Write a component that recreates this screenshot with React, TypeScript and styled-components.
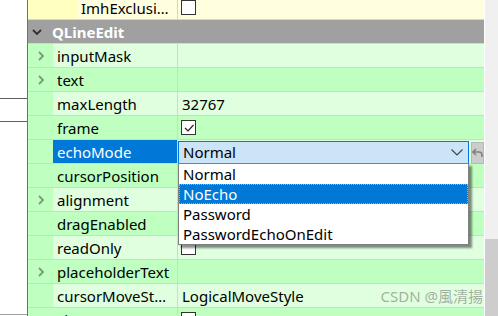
import styled, { createGlobalStyle } from 'styled-components'

const GlobalStyle = createGlobalStyle`
  html, body {
    margin: 0;
    padding: 0;
    background: #ffffff;
  }
  body {
    font-family: 'Noto Sans', 'Open Sans', 'Noto Sans CJK SC', sans-serif;
    font-size: 15px;
    color: #000000;
  }
`

const colors = {
  light: '#dfffdf',
  dark: '#bfffbf',
  yellowLight: '#ffffdf',
  yellowDark: '#ffffbf',
  header: '#a0a0a0',
  grid: '#d4d4d4',
  blue: '#0078d7',
  comboBg: '#cce4f7',
}

type Tone = 'light' | 'dark'

type Prop = {
  name: string
  tone: Tone
  expandable?: boolean
  value?: string
  check?: 'on' | 'off'
  combo?: boolean
}

const props: Prop[] = [
  { name: 'inputMask', tone: 'light', expandable: true },
  { name: 'text', tone: 'dark', expandable: true },
  { name: 'maxLength', tone: 'light', value: '32767' },
  { name: 'frame', tone: 'dark', check: 'on' },
  { name: 'echoMode', tone: 'light', combo: true },
  { name: 'cursorPosition', tone: 'dark' },
  { name: 'alignment', tone: 'light', expandable: true },
  { name: 'dragEnabled', tone: 'dark' },
  { name: 'readOnly', tone: 'light', check: 'off' },
  { name: 'placeholderText', tone: 'dark', expandable: true },
  { name: 'cursorMoveSt…', tone: 'light', value: 'LogicalMoveStyle' },
  { name: 'clearButtonEn…', tone: 'dark', check: 'off' },
]

const echoModes = ['Normal', 'NoEcho', 'Password', 'PasswordEchoOnEdit']

export default function App() {
  return (
    <>
      <GlobalStyle />
      <Screen>
        <LeftPane>
          <LeftBox />
          <LeftFooter />
        </LeftPane>
        <Tree>
          <Rows>
            <Row>
              <Branch $bg={colors.yellowDark} $w={50} />
              <NameCell $bg={colors.yellowLight} $w={100} $pad={3}>
                ImhExclusi…
              </NameCell>
              <ValueCell $bg={colors.yellowLight}>
                <CheckBox />
              </ValueCell>
            </Row>
            <HeaderRow>
              <HeaderBranch>
                <Chevron dir="down" color="#303030" />
              </HeaderBranch>
              <HeaderTitle>QLineEdit</HeaderTitle>
            </HeaderRow>
            {props.map((p) => (
              <PropRow key={p.name} prop={p} />
            ))}
          </Rows>
        </Tree>
        <ScrollTrack>
          <ScrollThumb />
        </ScrollTrack>
        <Watermark>CSDN @風清揚</Watermark>
      </Screen>
    </>
  )
}

const PropRow = ({ prop }: { prop: Prop }) => {
  const bg = prop.tone === 'light' ? colors.light : colors.dark
  return (
    <Row>
      <Branch $bg={colors.dark} $w={25}>
        {prop.expandable && <Chevron dir="right" color="#7a9a7a" />}
      </Branch>
      <NameCell $bg={prop.combo ? colors.blue : bg} $w={125} $selected={prop.combo}>
        {prop.name}
      </NameCell>
      <ValueCell $bg={bg}>
        {prop.value && <ValueText>{prop.value}</ValueText>}
        {prop.check && <CheckBox>{prop.check === 'on' && <CheckMark />}</CheckBox>}
        {prop.combo && <EchoCombo />}
      </ValueCell>
    </Row>
  )
}

const EchoCombo = () => (
  <ComboWrap>
    <Combo>
      <ValueText>Normal</ValueText>
      <svg width="12" height="7" viewBox="0 0 12 7">
        <polyline points="0.5,0.5 6,6 11.5,0.5" fill="none" stroke="#404040" strokeWidth="1.1" />
      </svg>
    </Combo>
    <ResetButton>
      <svg width="11" height="10" viewBox="0 0 11 10">
        <path d="M4 1 L1 4 L4 7 M1 4 H7 Q10 4 10 7 V9" fill="none" stroke="#808080" strokeWidth="1.6" />
      </svg>
    </ResetButton>
    <Popup>
      {echoModes.map((m) => (
        <PopupItem key={m} $active={m === 'NoEcho'}>
          {m}
        </PopupItem>
      ))}
    </Popup>
  </ComboWrap>
)

const Chevron = ({ dir, color }: { dir: 'down' | 'right'; color: string }) => (
  <svg width="10" height="10" viewBox="0 0 10 10">
    {dir === 'down' ? (
      <polyline points="1,3 5,7 9,3" fill="none" stroke={color} strokeWidth="1.8" />
    ) : (
      <polyline points="3,1 7,5 3,9" fill="none" stroke={color} strokeWidth="1.8" />
    )}
  </svg>
)

const CheckMark = () => (
  <svg width="12" height="12" viewBox="0 0 12 12">
    <polyline points="2,6 5,9 10.5,3" fill="none" stroke="#202020" strokeWidth="1.2" />
  </svg>
)

const Screen = styled.div`
  position: relative;
  display: flex;
  width: 498px;
  height: 316px;
  overflow: hidden;
  background: #ffffff;
`

const LeftPane = styled.div`
  display: flex;
  flex-direction: column;
  width: 27px;
  flex-shrink: 0;
  border-right: 1px solid #707070;
`

const LeftBox = styled.div`
  margin-top: 98px;
  height: 22px;
  border-top: 1px solid #606060;
  border-bottom: 1px solid #606060;
`

const LeftFooter = styled.div`
  margin-top: auto;
  margin-bottom: 1px;
  border-bottom: 1px solid #a0a0a0;
`

const Tree = styled.div`
  width: 456px;
  flex-shrink: 0;
  overflow: hidden;
  border-right: 1px solid #ffffff;
`

const Rows = styled.div`
  display: flex;
  flex-direction: column;
  margin-top: -4px;
`

const Row = styled.div`
  display: flex;
  height: 23px;
  flex-shrink: 0;
  border-bottom: 1px solid ${colors.grid};
`

const HeaderRow = styled(Row)`
  background: ${colors.header};
  align-items: center;
`

const HeaderBranch = styled.div`
  display: flex;
  align-items: center;
  width: 24px;
  padding-left: 4px;
  box-sizing: border-box;
`

const HeaderTitle = styled.div`
  color: #ffffff;
  font-weight: bold;
`

const Branch = styled.div<{ $bg?: string; $w: number }>`
  display: flex;
  align-items: center;
  justify-content: center;
  width: ${(p) => p.$w}px;
  flex-shrink: 0;
  background: ${(p) => p.$bg ?? 'transparent'};
  padding-left: 1px;
  box-sizing: border-box;
`

const NameCell = styled.div<{ $bg: string; $w: number; $selected?: boolean; $pad?: number }>`
  display: flex;
  align-items: center;
  width: ${(p) => p.$w}px;
  flex-shrink: 0;
  padding-left: ${(p) => p.$pad ?? 4}px;
  box-sizing: border-box;
  background: ${(p) => p.$bg};
  color: ${(p) => (p.$selected ? '#ffffff' : '#000000')};
  border-right: 1px solid ${colors.grid};
  white-space: nowrap;
  overflow: hidden;
`

const ValueCell = styled.div<{ $bg: string }>`
  position: relative;
  display: flex;
  align-items: center;
  flex: 1;
  min-width: 0;
  background: ${(p) => p.$bg};
`

const ValueText = styled.span`
  padding-left: 4px;
  white-space: nowrap;
`

const CheckBox = styled.div`
  display: flex;
  align-items: center;
  justify-content: center;
  width: 13px;
  height: 13px;
  margin-left: 3px;
  border: 1px solid #333333;
  background: #ffffff;
`

const ComboWrap = styled.div`
  position: relative;
  display: flex;
  align-items: stretch;
  gap: 1px;
  width: 100%;
  height: 23px;
  margin-top: 1px;
`

const Combo = styled.div`
  display: flex;
  align-items: center;
  justify-content: space-between;
  width: 291px;
  box-sizing: border-box;
  padding-right: 5px;
  background: ${colors.comboBg};
  border: 1px solid ${colors.blue};
`

const ResetButton = styled.div`
  display: flex;
  align-items: center;
  justify-content: center;
  width: 13px;
  margin: 1px 0 0 1px;
  background: #cccccc;
  border: 1px solid #b8b8b8;
  box-sizing: border-box;
`

const Popup = styled.div`
  position: absolute;
  top: 22px;
  left: 0;
  z-index: 5;
  width: 291px;
  box-sizing: border-box;
  background: #ffffff;
  border: 1px solid #808080;
  box-shadow: 3px 3px 2px rgba(0, 0, 0, 0.45);
`

const PopupItem = styled.div<{ $active?: boolean }>`
  display: flex;
  align-items: center;
  height: 20px;
  padding-left: 3px;
  box-sizing: border-box;
  background: ${(p) => (p.$active ? colors.blue : '#ffffff')};
  color: ${(p) => (p.$active ? '#ffffff' : '#000000')};
  border: 1px dotted ${(p) => (p.$active ? '#f0a040' : 'transparent')};
`

const ScrollTrack = styled.div`
  display: flex;
  flex-direction: column;
  flex: 1;
  background: #f0f0f0;
`

const ScrollThumb = styled.div`
  margin-top: 239px;
  flex: 1;
  background: #cdcdcd;
`

const Watermark = styled.div`
  position: absolute;
  right: 15px;
  bottom: 10px;
  color: rgba(120, 120, 120, 0.6);
  font-size: 15px;
  font-family: 'Noto Sans', 'Noto Sans CJK TC', sans-serif;
`
